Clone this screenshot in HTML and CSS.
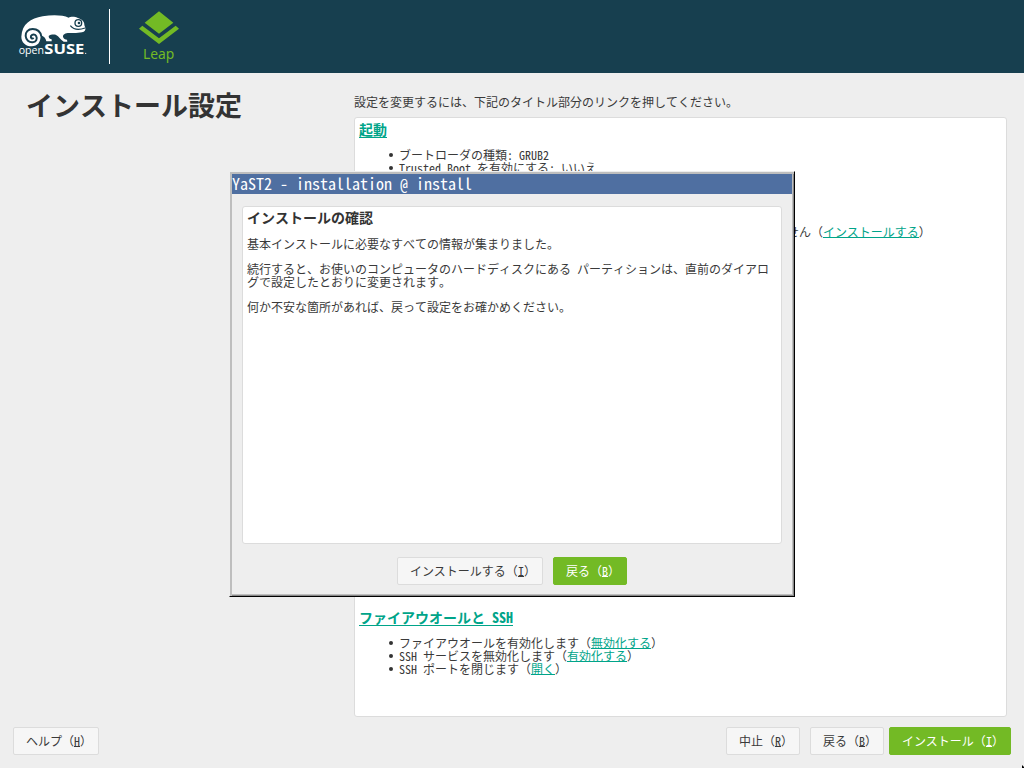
FILE: index.html
```html
<!DOCTYPE html>
<html lang="ja">
<head>
<meta charset="utf-8">
<title>YaST2 - installation @ install</title>
<link rel="stylesheet" href="styles.css">
</head>
<body>
<header class="banner">
  <svg class="logos" width="200" height="73" viewBox="0 0 600 219">
    <path fill="#fff" d="M64 110C66 72 92 55 128 49C158 44 188 45 206 53C211 49 225 49 232 53C248 58 254 66 253 75L256 84Q258 94 246 97C234 100 217 99 207 99C196 99 189 103 189 110C190 116 196 118 201 119L202 125H191C181 119 178 109 167 104C158 103 151 104 146 108C146 115 150 117 155 118V124H139C137 116 133 109 122 106C122 127 113 139 95 139C76 139 64 126 64 110Z"/>
    <path fill="none" stroke="#173f4f" stroke-width="6" d="M124 109C121 94 111 87 98 87C84 87 76 97 77 108C78 120 87 128 98 127C108 126 113 117 109 109C106 102 97 102 93 108C91 114 96 118 101 114"/>
    <path fill="none" stroke="#173f4f" stroke-width="3.5" d="M211 77C220 88 237 91 255 84"/>
    <circle cx="235" cy="69" r="10" fill="#fff" stroke="#173f4f" stroke-width="4"/>
    <circle cx="237" cy="69" r="4" fill="#173f4f"/>
    <text class="word-open" x="56" y="161" textLength="76" lengthAdjust="spacingAndGlyphs">open</text>
    <text class="word-suse" x="133" y="163" textLength="120" lengthAdjust="spacingAndGlyphs">SUSE</text>
    <circle cx="257" cy="160" r="2" fill="#fff"/>
    <path fill="#fff" d="M327 27h3v165h-3z"/>
    <path fill="#73ba25" d="M477 34L520 68L477 101L434 68ZM427 77L477 115L527 77L537 86L477 132L417 86Z"/>
    <text class="word-leap" x="429" y="177" textLength="94" lengthAdjust="spacingAndGlyphs">Leap</text>
  </svg>
</header>
<main class="main">
  <h1 class="title">インストール設定</h1>
  <section class="settings">
    <p class="intro">設定を変更するには、下記のタイトル部分のリンクを押してください。</p>
    <div class="panel">
      <div class="group boot">
        <h2><a>起動</a></h2>
        <ul>
          <li>ブートローダの種類: GRUB2</li>
          <li>Trusted Boot を有効にする: いいえ</li>
        </ul>
        <p class="tail wide">せん（<a>インストールする</a>）</p>
      </div>
      <div class="group firewall">
        <h2><a>ファイアウオールと SSH</a></h2>
        <ul>
          <li><span class="wide">ファイアウオールを有効化します（<a>無効化する</a>）</span></li>
          <li>SSH <span class="wide">サービスを無効化します（<a>有効化する</a>）</span></li>
          <li>SSH <span class="wide">ポートを閉じます（<a>開く</a>）</span></li>
        </ul>
      </div>
    </div>
  </section>
</main>
<footer class="footer">
  <button class="btn help">ヘルプ（<u>H</u>）</button>
  <button class="btn abort">中止（<u>R</u>）</button>
  <button class="btn back">戻る（<u>B</u>）</button>
  <button class="btn primary">インストール（<u>I</u>）</button>
</footer>
<div class="dialog">
  <div class="dialog-bar">YaST2 - installation @ install</div>
  <div class="dialog-text">
    <h3>インストールの確認</h3>
    <p>基本インストールに必要なすべての情報が集まりました。</p>
    <p>続行すると、お使いのコンピュータのハードディスクにある パーティションは、直前のダイアログで設定したとおりに変更されます。</p>
    <p>何か不安な箇所があれば、戻って設定をお確かめください。</p>
  </div>
  <div class="dialog-actions">
    <button class="btn">インストールする（<u>I</u>）</button>
    <button class="btn primary">戻る（<u>B</u>）</button>
  </div>
</div>
<svg class="pointer" width="2" height="3"><path d="M0 0L2 2V3H0Z"/></svg>
</body>
</html>
```
FILE: styles.css
```css
* { box-sizing: border-box; }
html, body { height: 100%; }
body {
  margin: 0;
  display: flex;
  flex-direction: column;
  position: relative;
  overflow: hidden;
  background: #eee;
  color: #3a3a3a;
  font: 12px/13px "Noto Sans CJK JP", sans-serif;
  font-feature-settings: "hwid" 1, "palt" 0, "kern" 0;
  text-spacing-trim: space-all;
}
h1, h2, h3, p, ul { margin: 0; padding: 0; }
a { color: #00a489; border-bottom: 1px solid #00a489; }
.wide, .btn { font-feature-settings: "hwid" 0; }

.banner { flex: none; height: 73px; background: #173f4f; }
.logos { display: block; }
.word-open { font: 31px "Open Sans", sans-serif; fill: #fff; }
.word-suse { font: bold 41px "Open Sans", sans-serif; fill: #fff; }
.word-leap { font: 44px "Noto Sans", sans-serif; fill: #73ba25; }
.logos text { font-feature-settings: normal; }

.main { flex: none; height: 644px; display: flex; }
.title { width: 354px; padding: 16px 0 0 26px; font-size: 27px; line-height: 31px; color: #333; }
.settings { width: 653px; padding-top: 22px; display: flex; flex-direction: column; }
.intro { height: 22px; }
.panel { height: 600px; background: #fff; border: 1px solid #dcdcdc; border-radius: 3px; padding: 3px 4px; overflow: hidden; }
.group h2 { height: 17px; font-size: 14px; line-height: 16px; }
.group h2 a { display: inline-block; height: 17px; }
.group ul { margin-top: 10px; padding-left: 40px; list-style: none; }
.group li { height: 13px; }
.group li::before { content: ""; float: left; width: 4px; height: 4px; margin: 5px 0 0 -10px; border-radius: 50%; background: #333; }
.boot { height: 488px; }
.tail { padding: 51px 0 0 428px; }
.tail a, .group li a { display: inline-block; height: 13px; vertical-align: top; }

.footer { display: flex; padding: 10px 13px 0; }
.btn {
  height: 28px;
  padding: 0 0 0 6px;
  border: 1px solid #dcdcdc;
  border-radius: 2px;
  background: #f6f6f6;
  color: #3a3a3a;
  font-family: inherit;
  font-size: 12px;
  line-height: 26px;
  white-space: nowrap;
  text-align: center;
}
.btn u {
  display: inline-block;
  width: 6px;
  height: 13px;
  line-height: 13px;
  text-decoration: none;
  border-bottom: 1px solid;
  font-feature-settings: "hwid" 1;
}
.btn.primary { background: #73ba25; border-color: #73ba25; color: #fff; }
.help { width: 86px; margin-right: auto; }
.abort, .back { width: 74px; }
.back { margin: 0 5px 0 10px; }
.footer .primary { width: 122px; }

.dialog {
  position: absolute;
  left: 229px;
  top: 171px;
  width: 566px;
  height: 426px;
  padding: 2px 0 0 1px;
  background: #eee;
  border-style: solid;
  border-width: 1px;
  border-color: #eee #000 #000 #eee;
  box-shadow: inset 2px 2px #bebebe, inset -1px -1px #888, inset -2px -2px #bebebe;
}
.dialog-bar { width: 560px; height: 20px; margin-left: 1px; background: #4f6fa1; color: #fff; font-size: 16px; line-height: 19px; white-space: pre; }
.dialog-text { width: 540px; height: 338px; margin: 12px 0 0 11px; padding: 2px 4px; background: #fff; border: 1px solid #dcdcdc; border-radius: 3px; }
.dialog-text h3 { font-size: 14px; line-height: 16px; margin-bottom: 12px; color: #333; }
.dialog-text p { width: 524px; margin-bottom: 12px; word-break: break-all; }
.dialog-actions { display: flex; gap: 10px; padding: 13px 0 0 166px; }
.dialog-actions .btn { width: 146px; }
.dialog-actions .primary { width: 74px; }
.pointer { position: absolute; right: 0; bottom: 0; }
```
